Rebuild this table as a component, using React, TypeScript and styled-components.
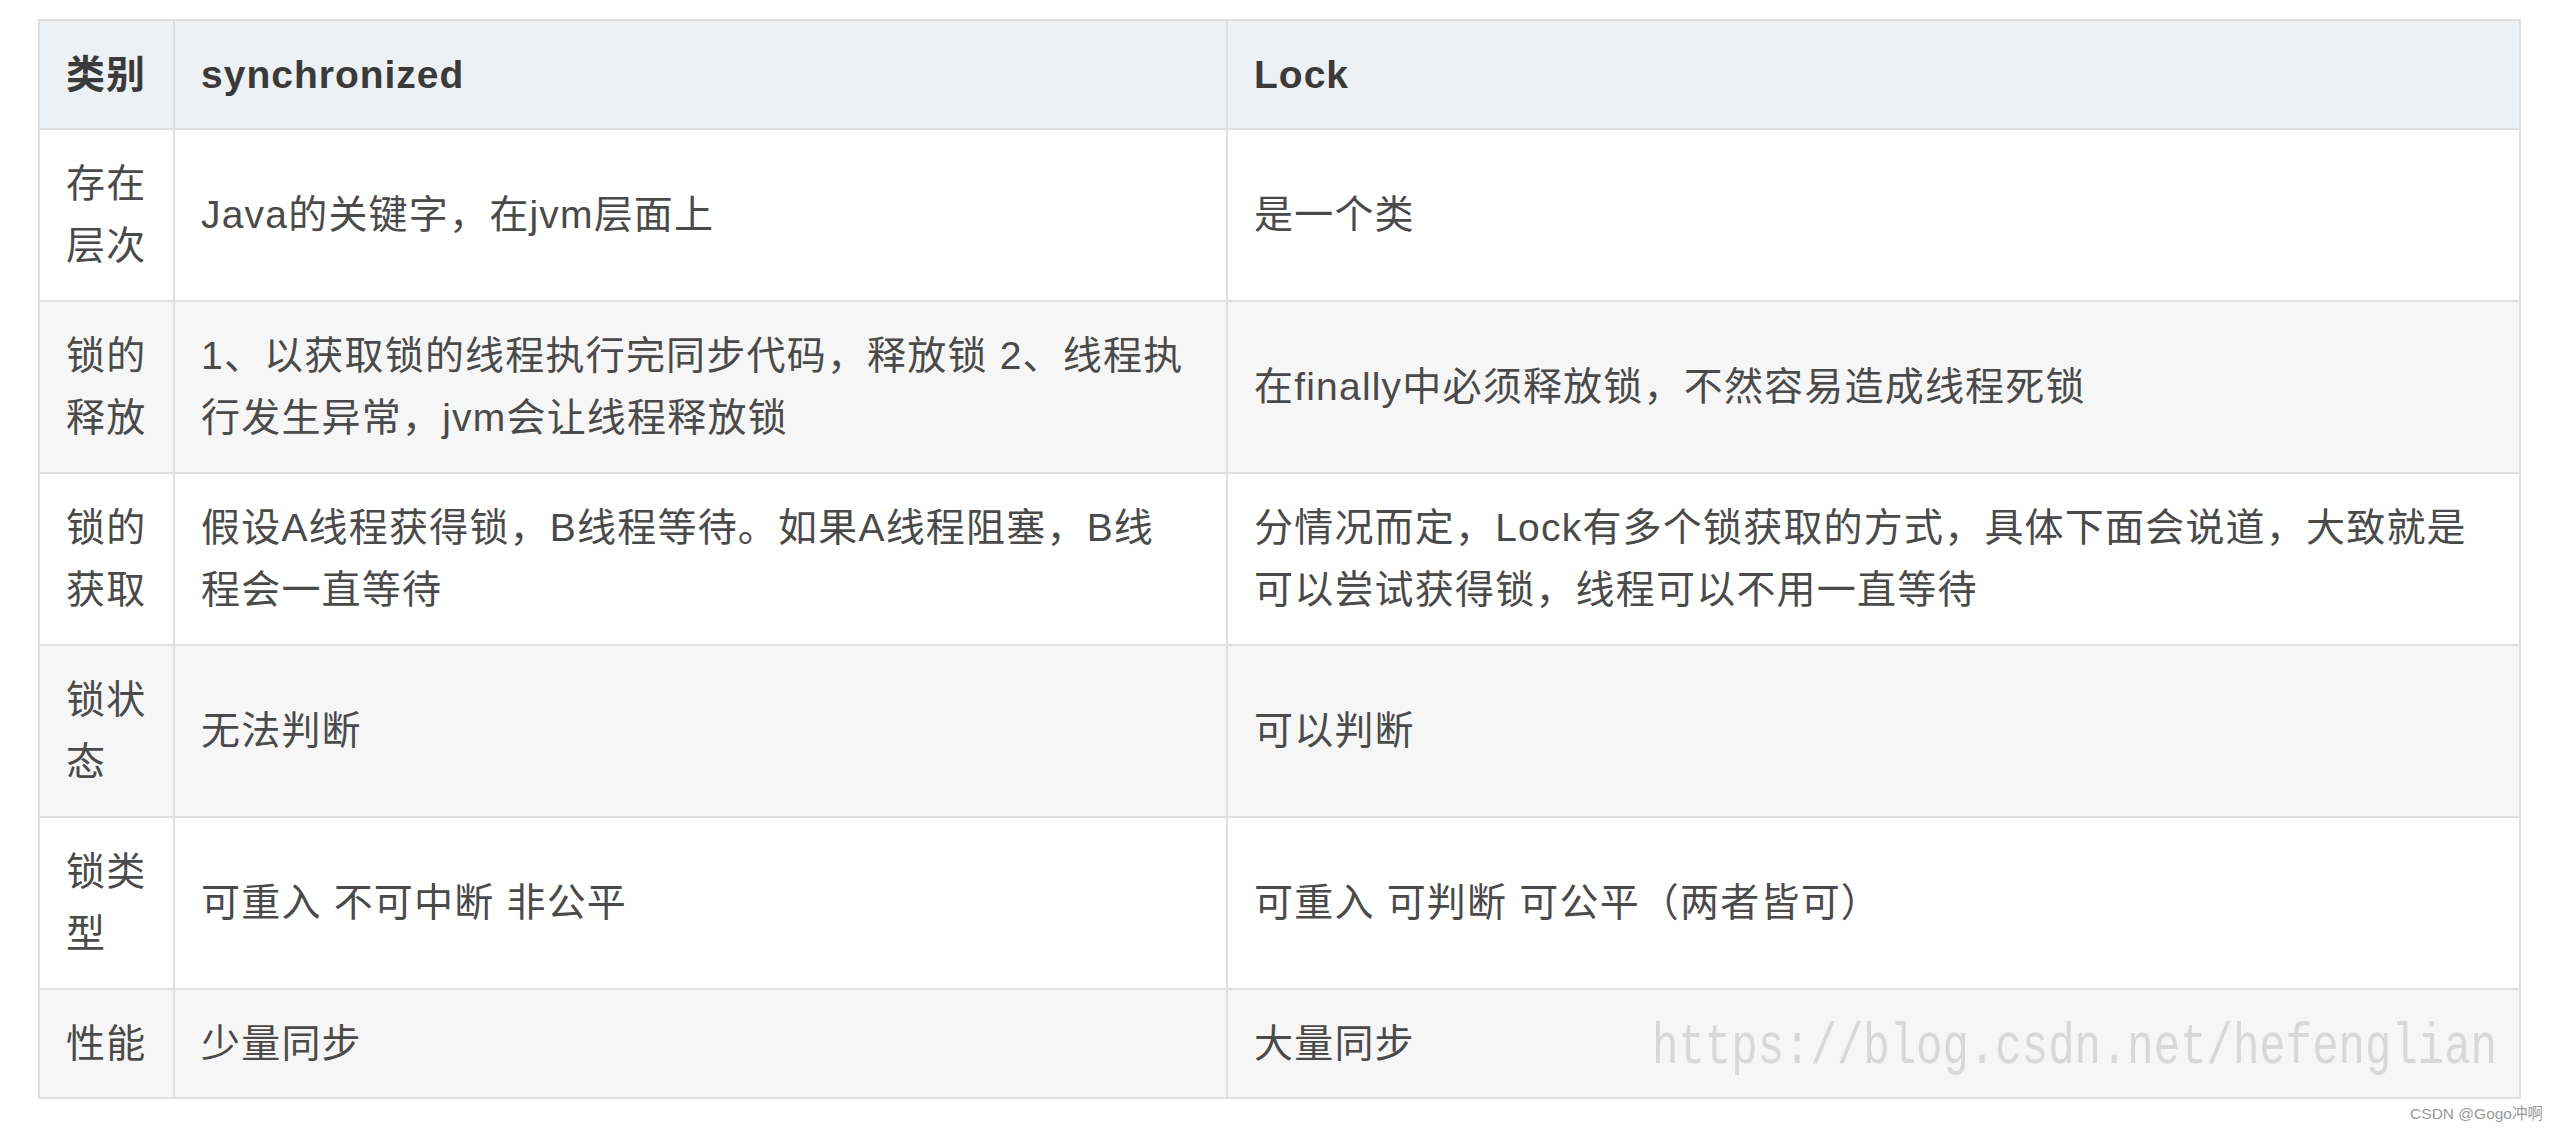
import React from "react";
import styled, { createGlobalStyle } from "styled-components";

const GlobalStyle = createGlobalStyle`
  html, body {
    margin: 0;
    padding: 0;
    background: #ffffff;
  }
  body {
    font-family: "Liberation Sans", "Noto Sans CJK SC", sans-serif;
  }
`;

const Page = styled.div`
  display: flex;
  flex-direction: column;
  padding-top: 19px;
  width: 2560px;
`;

const TableWrap = styled.div`
  margin-left: 38px;
  width: 2481px;
`;

const Table = styled.table`
  width: 2481px;
  border-collapse: collapse;
  table-layout: fixed;
  font-family: "Liberation Sans", "Noto Sans CJK SC", sans-serif;
  font-size: 39px;
  line-height: 62px;
  color: #4a4a4a;
`;

const HeadRow = styled.tr`
  background: #eef1f4;
`;

const BodyRow = styled.tr<{ $striped: boolean }>`
  background: ${(p) => (p.$striped ? "#f6f6f6" : "#ffffff")};
`;

const HeadCell = styled.th<{ $first?: boolean }>`
  border: 2px solid #e0e0e0;
  padding: ${(p) => (p.$first ? "23px 22px 22px 26px" : "23px 20px 22px 26px")};
  text-align: left;
  vertical-align: middle;
  font-weight: 700;
  color: #3a3a3a;
  letter-spacing: 1px;
  white-space: nowrap;
`;

const Cell = styled.td<{ $first?: boolean; $single?: boolean }>`
  border: 2px solid #e0e0e0;
  padding: ${(p) =>
    p.$single
      ? p.$first
        ? "23px 22px 22px 26px"
        : "23px 20px 22px 26px"
      : p.$first
      ? "23px 22px 23px 26px"
      : "23px 20px 23px 26px"};
  text-align: left;
  vertical-align: middle;
  letter-spacing: 1.2px;
  word-break: break-all;
`;

const LastCell = styled(Cell)`
  position: relative;
`;

const Watermark = styled.span`
  position: absolute;
  right: 22px;
  top: 50%;
  font-family: "Liberation Mono", monospace;
  font-size: 44px;
  line-height: 44px;
  letter-spacing: 0;
  color: #d8d8d8;
  white-space: nowrap;
  transform: translateY(-42%) scaleY(1.3);
  pointer-events: none;
`;

const Footer = styled.div`
  display: flex;
  justify-content: flex-end;
  padding: 6px 17px 0 0;
`;

const Credit = styled.span`
  font-family: "Liberation Sans", "Noto Sans CJK SC", sans-serif;
  font-size: 15.5px;
  line-height: 18px;
  color: #9a9a9a;
`;

type Row = {
  label: string;
  sync: React.ReactNode;
  lock: React.ReactNode;
};

const rows: Row[] = [
  {
    label: "存在层次",
    sync: "Java的关键字，在jvm层面上",
    lock: "是一个类",
  },
  {
    label: "锁的释放",
    sync: (
      <>
        1、以获取锁的线程执行完同步代码，释放锁 2、线程执
        <br />
        行发生异常，jvm会让线程释放锁
      </>
    ),
    lock: "在finally中必须释放锁，不然容易造成线程死锁",
  },
  {
    label: "锁的获取",
    sync: (
      <>
        假设A线程获得锁，B线程等待。如果A线程阻塞，B线
        <br />
        程会一直等待
      </>
    ),
    lock: (
      <>
        分情况而定，Lock有多个锁获取的方式，具体下面会说道，大致就是
        <br />
        可以尝试获得锁，线程可以不用一直等待
      </>
    ),
  },
  {
    label: "锁状态",
    sync: "无法判断",
    lock: "可以判断",
  },
  {
    label: "锁类型",
    sync: "可重入 不可中断 非公平",
    lock: "可重入 可判断 可公平（两者皆可）",
  },
];

export default function App() {
  return (
    <>
      <GlobalStyle />
      <Page>
        <TableWrap>
          <Table>
            <colgroup>
              <col style={{ width: 135 }} />
              <col style={{ width: 1053 }} />
              <col style={{ width: 1293 }} />
            </colgroup>
            <thead>
              <HeadRow>
                <HeadCell $first>类别</HeadCell>
                <HeadCell>synchronized</HeadCell>
                <HeadCell>Lock</HeadCell>
              </HeadRow>
            </thead>
            <tbody>
              {rows.map((r, i) => (
                <BodyRow key={r.label} $striped={i % 2 === 1}>
                  <Cell $first>{r.label}</Cell>
                  <Cell>{r.sync}</Cell>
                  <Cell>{r.lock}</Cell>
                </BodyRow>
              ))}
              <BodyRow $striped>
                <Cell $first $single>
                  性能
                </Cell>
                <Cell $single>少量同步</Cell>
                <LastCell $single>
                  大量同步
                  <Watermark>https://blog.csdn.net/hefenglian</Watermark>
                </LastCell>
              </BodyRow>
            </tbody>
          </Table>
        </TableWrap>
        <Footer>
          <Credit>CSDN @Gogo冲啊</Credit>
        </Footer>
      </Page>
    </>
  );
}
